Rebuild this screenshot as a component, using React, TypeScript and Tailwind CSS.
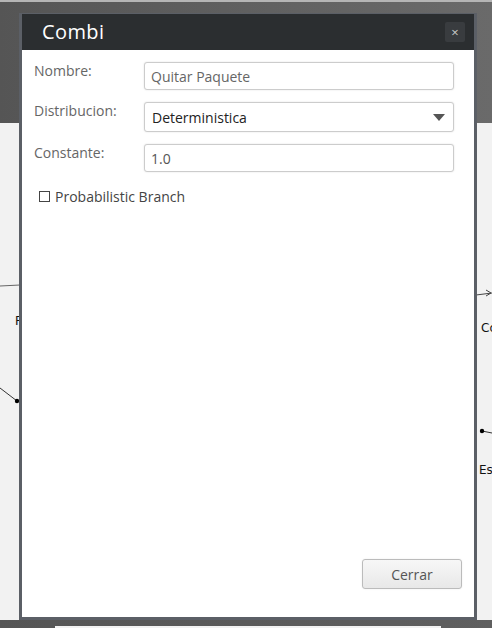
const fields = [
  { label: "Nombre:", value: "Quitar Paquete", kind: "input", tone: "text-[#666]" },
  { label: "Distribucion:", value: "Deterministica", kind: "select", tone: "text-[#222]" },
  { label: "Constante:", value: "1.0", kind: "input", tone: "text-[#555]" },
];

function Diagram() {
  return (
    <svg className="absolute inset-0" width="492" height="628" viewBox="0 0 492 628">
      <line x1="0" y1="286" x2="20" y2="285" stroke="#666" strokeWidth="1" />
      <text x="15" y="325" fontSize="12" fill="#111" fontFamily="DejaVu Sans, sans-serif">P</text>
      <line x1="0" y1="388" x2="17" y2="401" stroke="#333" strokeWidth="1" />
      <circle cx="17" cy="401" r="2.2" fill="#000" />
      <line x1="476" y1="295" x2="492" y2="293" stroke="#444" strokeWidth="1" />
      <path d="M486 290 L491 293 L486 296" fill="none" stroke="#444" strokeWidth="1" />
      <text x="481" y="332" fontSize="12" fill="#111" fontFamily="DejaVu Sans, sans-serif">Co</text>
      <line x1="482" y1="431" x2="492" y2="433" stroke="#333" strokeWidth="1" />
      <circle cx="482" cy="431" r="2.2" fill="#000" />
      <text x="479" y="474" fontSize="12" fill="#111" fontFamily="DejaVu Sans, sans-serif">Es</text>
    </svg>
  );
}

export default function App() {
  return (
    <div
      className="relative flex h-[628px] w-[492px] flex-col overflow-hidden bg-[#f2f2f2]"
      style={{ fontFamily: '"Open Sans", "DejaVu Sans", sans-serif' }}
    >
      <div className="h-[123px] border-t-2 border-[#b5b5b5] bg-gradient-to-r from-[#555] via-[#606060] to-[#6a6a6a]" />
      <div className="flex-1" />
      <div className="h-[8px] bg-gradient-to-r from-[#555] to-[#5f5f5f] pt-[6px] pl-[55px] pr-[51px]">
        <div className="h-[2px] bg-[#f2f2f2]" />
      </div>

      <Diagram />

      {/* modal */}
      <div className="absolute left-[19px] top-[13px] flex h-[607px] w-[458px] flex-col border-x-[3px] border-b-[3px] border-t border-[#5b5f66] bg-white">
        <div className="flex h-[36px] items-center justify-between bg-[#2b2e30] pl-[20px] pr-[9px]">
          <span className="text-[20px] leading-none tracking-[0.4px] text-white">Combi</span>
          <button className="flex h-[20px] w-[20px] items-center justify-center rounded-[2px] bg-[#393c3f] text-[13px] leading-none text-[#ccc]">
            ×
          </button>
        </div>

        <div className="flex flex-1 flex-col pb-[28px] pl-[12px] pr-[12px] pt-[12px]">
          <div className="flex flex-col gap-[12px] pr-[8px]">
            {fields.map((f) => (
              <div key={f.label} className="flex items-start">
                <div className="mt-[-1px] w-[110px] text-[14px] leading-[19px] text-[#666]">{f.label}</div>
                <div
                  className={`flex flex-1 items-center justify-between rounded-[3px] border border-[#ccc] bg-white pl-[6px] pr-[8px] shadow-[0_0_2px_rgba(0,0,0,0.12)] ${
                    f.kind === "select" ? "h-[30px]" : "h-[28px]"
                  }`}
                >
                  <span className={`text-[14px] leading-[19px] ${f.tone} ${f.kind === "select" ? "pl-[1px]" : ""}`}>
                    {f.value}
                  </span>
                  {f.kind === "select" && (
                    <svg width="12" height="7" viewBox="0 0 12 7">
                      <path d="M0 0 H12 L6 7 Z" fill="#555" />
                    </svg>
                  )}
                </div>
              </div>
            ))}
          </div>

          <label className="mt-[15px] flex items-center pl-[5px]">
            <span className="h-[11px] w-[11px] border border-[#444] bg-white" />
            <span className="ml-[5px] text-[14px] leading-[19px] text-[#444]">Probabilistic Branch</span>
          </label>

          <div className="flex-1" />

          <div className="flex justify-end">
            <button className="h-[30px] w-[100px] rounded-[3px] border border-[#bbb] bg-gradient-to-b from-[#f7f7f7] to-[#e8e8e8] text-[14px] text-[#555] shadow-[0_0_2px_rgba(0,0,0,0.08)]">
              Cerrar
            </button>
          </div>
        </div>
      </div>
    </div>
  );
}
